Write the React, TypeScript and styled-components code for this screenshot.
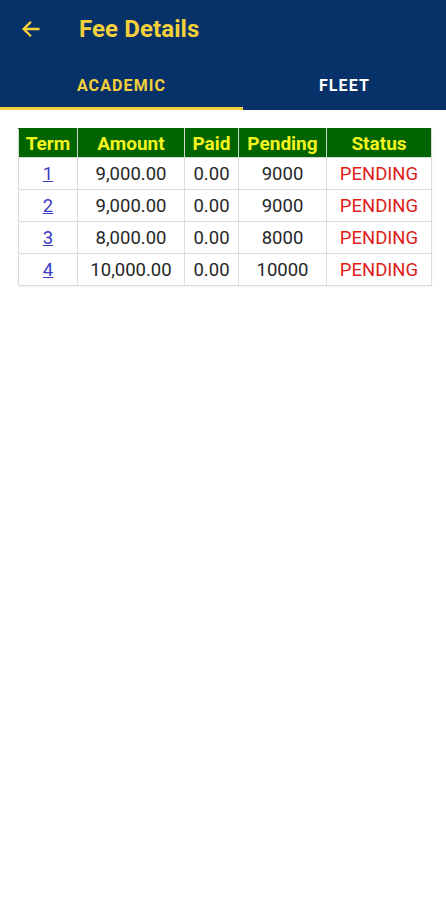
import styled, { createGlobalStyle } from 'styled-components';

const GlobalStyle = createGlobalStyle`
  html, body {
    margin: 0;
    padding: 0;
    background: #ffffff;
    font-family: Roboto, "Liberation Sans", sans-serif;
  }
`;

const rows = [
  { term: '1', amount: '9,000.00', paid: '0.00', pending: '9000' },
  { term: '2', amount: '9,000.00', paid: '0.00', pending: '9000' },
  { term: '3', amount: '8,000.00', paid: '0.00', pending: '8000' },
  { term: '4', amount: '10,000.00', paid: '0.00', pending: '10000' },
];

const columns = [
  { label: 'Term', width: 59 },
  { label: 'Amount', width: 107 },
  { label: 'Paid', width: 54 },
  { label: 'Pending', width: 88 },
  { label: 'Status', width: 105 },
];

export default function App() {
  return (
    <>
      <GlobalStyle />
      <Page>
        <Header>
          <TopBar>
            <BackButton aria-label="back">
              <svg width="22" height="22" viewBox="0 0 24 24" fill="none">
                <path
                  d="M20 12H5M11 5l-7 7 7 7"
                  stroke="#f4d03a"
                  strokeWidth="2.6"
                  strokeLinecap="square"
                />
              </svg>
            </BackButton>
            <Title>Fee Details</Title>
          </TopBar>
          <Tabs>
            <Tab $active $width={243}>ACADEMIC</Tab>
            <Tab $width={203}>FLEET</Tab>
          </Tabs>
        </Header>
        <Content>
          <Table>
            <colgroup>
              {columns.map((c) => (
                <col key={c.label} style={{ width: c.width }} />
              ))}
            </colgroup>
            <thead>
              <tr>
                {columns.map((c) => (
                  <Th key={c.label}>{c.label}</Th>
                ))}
              </tr>
            </thead>
            <tbody>
              {rows.map((r) => (
                <tr key={r.term}>
                  <Td>
                    <TermLink href="#">{r.term}</TermLink>
                  </Td>
                  <Td>{r.amount}</Td>
                  <Td>{r.paid}</Td>
                  <Td>{r.pending}</Td>
                  <Td $status>PENDING</Td>
                </tr>
              ))}
            </tbody>
          </Table>
        </Content>
      </Page>
    </>
  );
}

const Page = styled.div`
  width: 446px;
  min-height: 900px;
  background: #ffffff;
`;

const Header = styled.header`
  background: #073169;
  display: flex;
  flex-direction: column;
`;

const TopBar = styled.div`
  height: 58px;
  display: flex;
  align-items: center;
  padding-left: 19px;
`;

const BackButton = styled.div`
  width: 24px;
  height: 24px;
  display: flex;
  align-items: center;
  justify-content: center;
  margin-right: 36px;
`;

const Title = styled.h1`
  margin: 0;
  color: #f4d03a;
  font-size: 24px;
  font-weight: 700;
  letter-spacing: 0.1px;
`;

const Tabs = styled.div`
  display: flex;
  height: 52px;
`;

const Tab = styled.div<{ $active?: boolean; $width: number }>`
  width: ${(p) => p.$width}px;
  box-sizing: border-box;
  display: flex;
  align-items: center;
  justify-content: center;
  padding-top: 5px;
  font-size: 16px;
  font-weight: 700;
  letter-spacing: 1.1px;
  color: ${(p) => (p.$active ? '#f4d03a' : '#ffffff')};
  border-bottom: 3px solid ${(p) => (p.$active ? '#f4d03a' : 'transparent')};
`;

const Content = styled.div`
  padding: 18px 15px 0 18px;
`;

const Table = styled.table`
  border-collapse: collapse;
  table-layout: fixed;
  width: 413px;
  font-size: 18.5px;
  color: #222;
  box-shadow: 0 1px 2px rgba(0, 0, 0, 0.06);
`;

const Th = styled.th`
  background: #006400;
  color: #f4f41f;
  font-weight: 700;
  font-size: 19px;
  height: 28px;
  padding: 0;
  border: 1px solid #d6d6d6;
  border-top-color: #006400;
  text-align: center;
`;

const Td = styled.td<{ $status?: boolean }>`
  height: 31px;
  padding: 0;
  text-align: center;
  white-space: nowrap;
  border: 1px solid #dcdcdc;
  color: ${(p) => (p.$status ? '#e01b1b' : '#262626')};
`;

const TermLink = styled.a`
  color: #3b3bc4;
  text-decoration: underline;
`;
